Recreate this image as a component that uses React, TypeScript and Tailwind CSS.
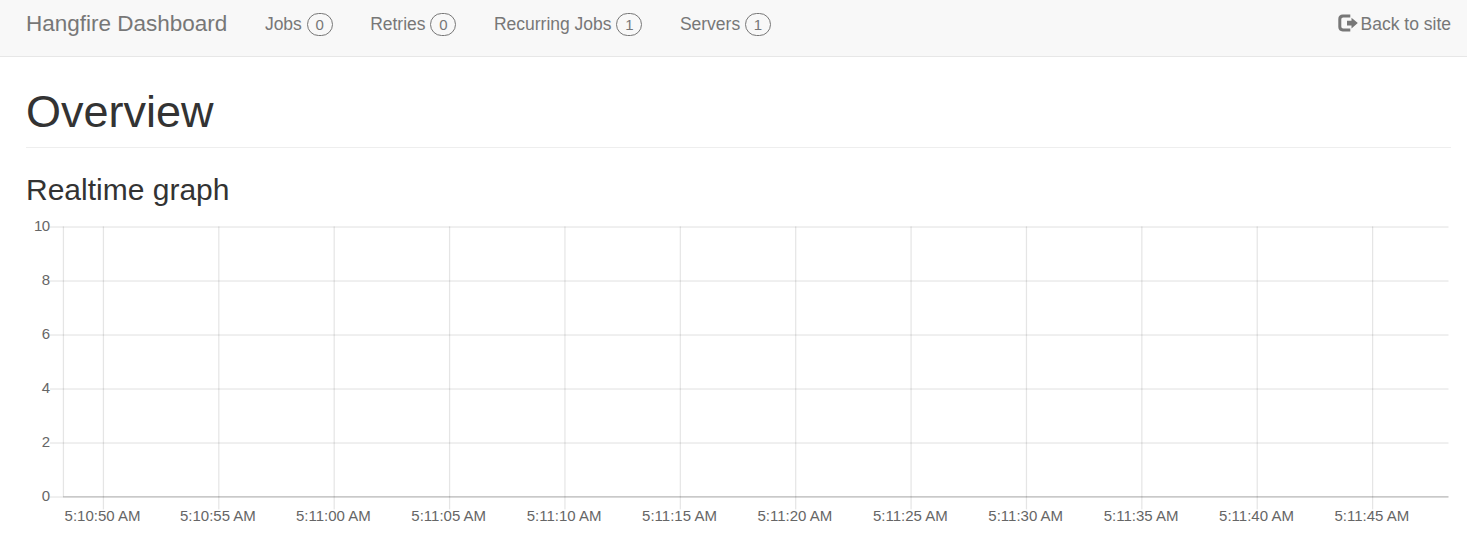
const navItems = [
  { label: 'Jobs', count: 0 },
  { label: 'Retries', count: 0 },
  { label: 'Recurring Jobs', count: 1 },
  { label: 'Servers', count: 1 },
];

const yTicks = [10, 8, 6, 4, 2, 0];
const xTicks = [
  '5:10:50 AM', '5:10:55 AM', '5:11:00 AM', '5:11:05 AM', '5:11:10 AM', '5:11:15 AM',
  '5:11:20 AM', '5:11:25 AM', '5:11:30 AM', '5:11:35 AM', '5:11:40 AM', '5:11:45 AM',
];

function LogOutIcon() {
  return (
    <svg className="mr-[3px] mb-[3px] h-[18px] w-[20px] shrink-0" viewBox="0 0 20 18" fill="#777777">
      <path d="M12.3 0.5H4.7C2 0.5 0.3 2.2 0.3 4.9v8.2c0 2.7 1.7 4.4 4.4 4.4h7.6v-3H5.3c-1.2 0-2-.8-2-2V5.5c0-1.2.8-2 2-2h7z" />
      <path d="M13.5 3.8v3H9v4.6h4.5v3L19.8 9.1z" />
    </svg>
  );
}

function Graph() {
  return (
    <svg className="block h-[325px] w-full" viewBox="0 0 1425 325" fontFamily="'Liberation Sans', Arial, sans-serif" fontSize="15" fill="#666666">
      {yTicks.map((value, i) => (
        <g key={value}>
          <rect x="24" y={11.4 + i * 54} width={value === 0 ? 13 : 1398.5} height="1.25" fill="#000" fillOpacity="0.1" />
          <text x="24" y={16 + i * 54} textAnchor="end" textLength={value === 10 ? 16 : undefined}>{value}</text>
        </g>
      ))}
      <rect x="36.8" y="11.4" width="1.25" height="270" fill="#000" fillOpacity="0.1" />
      {xTicks.map((label, i) => (
        <g key={label}>
          <rect x={76.8 + i * 115.38} y="11.4" width="1.25" height="283" fill="#000" fillOpacity="0.1" />
          <text x={76.5 + i * 115.4} y="306" textAnchor="middle">{label}</text>
        </g>
      ))}
      <rect x="37" y="281" width="1385.5" height="1" fill="#000" fillOpacity="0.21" />
      <rect x="37" y="282" width="1385.5" height="1" fill="#000" fillOpacity="0.15" />
    </svg>
  );
}

export default function App() {
  return (
    <div className="h-[546px] overflow-hidden bg-white font-['Liberation_Sans',Arial,sans-serif] text-[#333333]">
      <header className="flex h-[57px] items-center border-b border-[#e7e7e7] bg-[#f8f8f8] pr-4 pb-2 pl-[26px] text-[17.5px] text-[#777777]">
        <a className="mr-[37.5px] text-[22.5px] leading-none">Hangfire Dashboard</a>
        <nav className="flex items-center gap-[37.5px]">
          {navItems.map((item) => (
            <a key={item.label} className="flex items-center whitespace-nowrap">
              {item.label}
              <span className="mt-px ml-[4.8px] flex h-[23px] w-[26px] items-center justify-center rounded-[12px] border border-[#777777] text-[15px] leading-none">
                {item.count}
              </span>
            </a>
          ))}
        </nav>
        <a className="ml-auto flex items-center whitespace-nowrap">
          <LogOutIcon />
          Back to site
        </a>
      </header>
      <main className="pr-4 pl-[26px]">
        <h1 className="h-[91px] border-b border-[#eeeeee] pt-[30px] text-[45px] leading-[50px]">Overview</h1>
        <h3 className="h-[67px] pt-[25px] text-[30px] leading-[33px]">Realtime graph</h3>
        <Graph />
      </main>
    </div>
  );
}
